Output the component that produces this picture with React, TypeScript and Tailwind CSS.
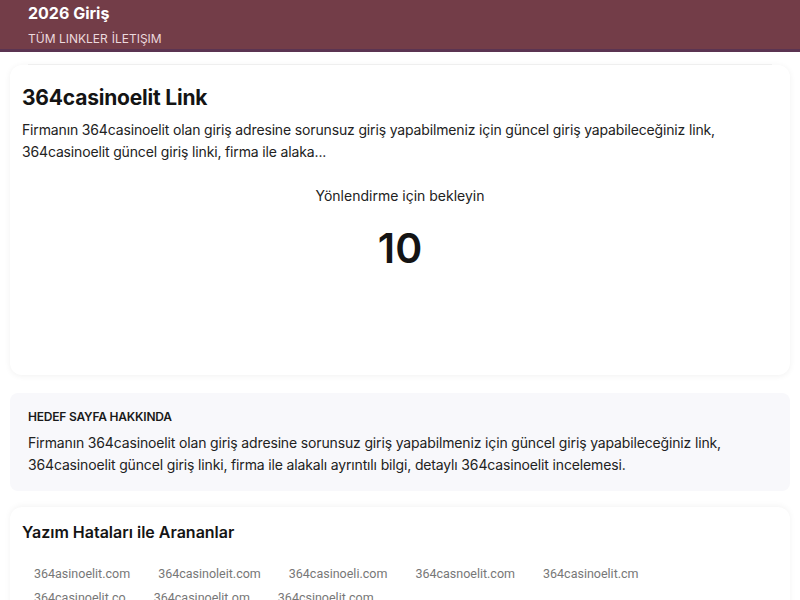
const TYPOS = [
  "364asinoelit.com",
  "364casinoleit.com",
  "364casinoeli.com",
  "364casnoelit.com",
  "364casinoelit.cm",
  "364casinoelit.co",
  "364casinoelit.om",
  "364csinoelit.com",
];

const DESC =
  "Firmanın 364casinoelit olan giriş adresine sorunsuz giriş yapabilmeniz için güncel giriş yapabileceğiniz link, 364casinoelit güncel giriş linki, firma ile alakalı ayrıntılı bilgi, detaylı 364casinoelit incelemesi.";

export default function App() {
  return (
    <div className="min-h-screen bg-white text-[#141414] font-['Inter','Noto_Sans',sans-serif]">
      {/* üst bar */}
      <header className="bg-[#733d48] border-b-[3px] border-[#5b3451]">
        <div className="px-[28px] pt-[3px] pb-[2px]">
          <div className="text-white text-[16px] font-bold leading-[20px]">2026 Giriş</div>
          <nav className="mt-[8px] flex gap-[4px] text-[12px] leading-[16px] text-[#ecd9dd]">
            <a>TÜM LINKLER</a>
            <a>İLETIŞIM</a>
          </nav>
        </div>
      </header>

      <main className="px-[10px]">
        <div className="mx-[18px] mt-[12px] h-px bg-[#f3f3f3]" />

        {/* yönlendirme kartı */}
        <section className="h-[310px] rounded-xl bg-white shadow-[0_1px_6px_rgba(0,0,0,0.06)] px-[12px] pt-[20px]">
          <h1 className="text-[21px] font-bold leading-[26px] tracking-[-0.2px]">364casinoelit Link</h1>
          <p className="mt-[8px] text-[14px] leading-[22px] tracking-[-0.15px] text-[#222]">
            Firmanın 364casinoelit olan giriş adresine sorunsuz giriş yapabilmeniz için güncel giriş yapabileceğiniz link,
            <br />
            364casinoelit güncel giriş linki, firma ile alaka...
          </p>
          <div className="mt-[23px] text-center text-[14px] leading-[20px] text-[#222]">Yönlendirme için bekleyin</div>
          <div className="mt-[18px] text-center text-[41px] font-semibold leading-[48px]">10</div>
        </section>

        {/* hedef sayfa */}
        <section className="mt-[18px] rounded-lg bg-[#f8f8fb] px-[18px] pt-[16px] pb-[15px]">
          <h2 className="text-[12px] font-semibold leading-[16px] tracking-[-0.2px] text-[#1a1a1a]">HEDEF SAYFA HAKKINDA</h2>
          <p className="mt-[7px] max-w-[720px] text-[14px] leading-[22px] tracking-[-0.15px] text-[#222]">{DESC}</p>
        </section>

        {/* yazım hataları */}
        <section className="mt-[16px] rounded-t-xl bg-white shadow-[0_-1px_6px_rgba(0,0,0,0.05)] px-[12px] pt-[14px]">
          <h2 className="text-[16px] font-semibold leading-[22px]">Yazım Hataları ile Arananlar</h2>
          <ul className="mt-[21px] pr-[60px] flex flex-wrap gap-x-[4px] gap-y-[4px] font-['Roboto',sans-serif] text-[12.5px] leading-[18px] text-[#777]">
            {TYPOS.map((t) => (
              <li key={t} className="px-[12px] py-[1px]">
                {t}
              </li>
            ))}
          </ul>
        </section>
      </main>
    </div>
  );
}
